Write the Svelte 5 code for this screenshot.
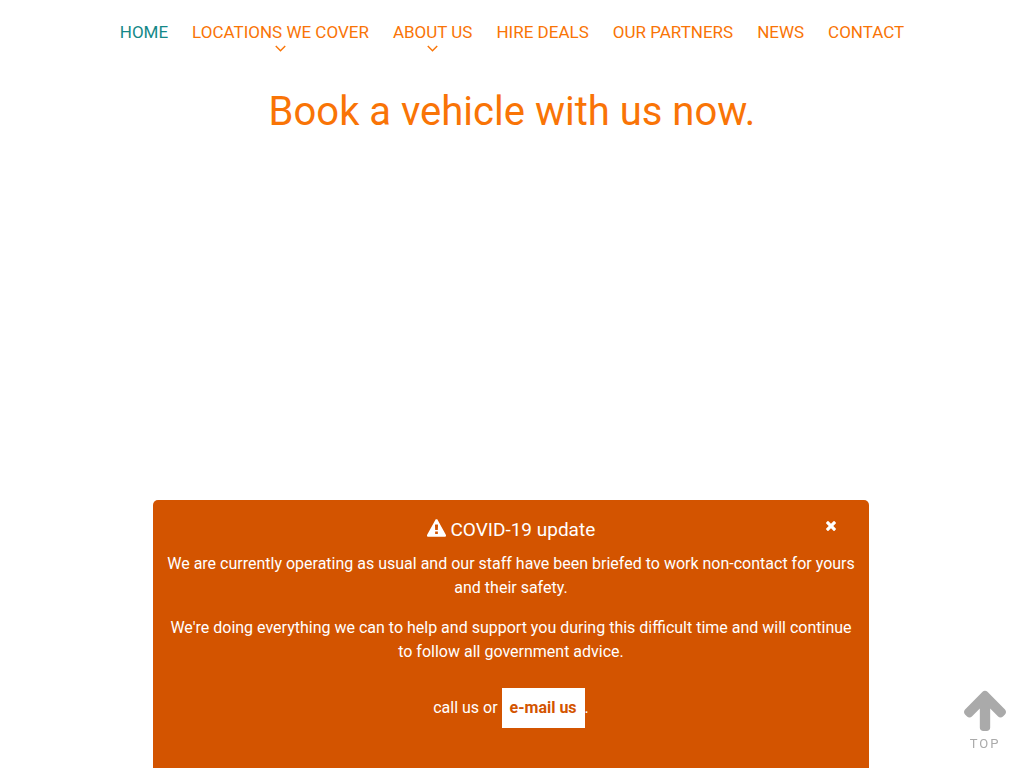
<script>
  const links = [
    { label: 'Home', active: true },
    { label: 'Locations we cover', menu: true },
    { label: 'About us', menu: true },
    { label: 'Hire deals' },
    { label: 'Our partners' },
    { label: 'News' },
    { label: 'Contact' }
  ];
  let open = $state(true);
</script>

<header>
  <nav aria-label="Main">
    <ul>
      {#each links as link}
        <li>
          <a href="#top" class:active={link.active}>{link.label}</a>
          {#if link.menu}
            <svg class="chevron" viewBox="0 0 10 6" aria-hidden="true"><path d="M.7.7 5 5 9.3.7" /></svg>
          {/if}
        </li>
      {/each}
    </ul>
  </nav>
</header>

<main>
  <h1>Book a vehicle with us now.</h1>
</main>

{#if open}
  <section class="notice">
    <button aria-label="Close" onclick={() => (open = false)}>
      <svg viewBox="110 366 1188 1188" aria-hidden="true"><path d="M1298 1322q0 40-28 68l-136 136q-28 28-68 28t-68-28L704 1232l-294 294q-28 28-68 28t-68-28l-136-136q-28-28-28-68t28-68l294-294L138 666q-28-28-28-68t28-68l136-136q28-28 68-28t68 28l294 294 294-294q28-28 68-28t68 28l136 136q28 28 28 68t-28 68L976 960l294 294q28 28 28 68z" /></svg>
    </button>
    <h2>
      <svg viewBox="0 128 1792 1664" aria-hidden="true"><path d="M1024 1503v-190q0-14-9.500-23.500t-22.500-9.500h-192q-13 0-22.500 9.500t-9.500 23.500v190q0 14 9.500 23.500t22.500 9.500h192q13 0 22.500-9.500t9.500-23.500zm-2-374l18-459q0-12-10-19-13-11-24-11h-220q-11 0-24 11-10 7-10 21l17 457q0 10 10 16.500t24 6.500h185q14 0 23.500-6.500t10.500-16.500zm-14-934l768 1408q35 63-2 126-17 29-46.500 46t-63.500 17h-1536q-34 0-63.500-17t-46.500-46q-37-63-2-126l768-1408q17-31 47-49t65-18 65 18 47 49z" /></svg>
      COVID-19 update
    </h2>
    <p>We are currently operating as usual and our staff have been briefed to work non-contact for yours and their safety.</p>
    <p>We're doing everything we can to help and support you during this difficult time and will continue to follow all government advice.</p>
    <p class="contact">call us or <a href="#email">e-mail us</a>.</p>
  </section>
{/if}

<a class="top" href="#top">
  <svg viewBox="53 128 1558 1536" preserveAspectRatio="none" aria-hidden="true"><path d="M1611 971q0 51-37 90l-75 75q-38 38-91 38-54 0-90-38l-294-293v704q0 52-37.500 84.500t-90.500 32.500h-128q-53 0-90.500-32.500t-37.500-84.500v-704l-294 293q-36 38-90 38t-90-38l-75-75q-38-38-38-90 0-53 38-91l651-651q35-37 90-37 54 0 91 37l651 651q37 39 37 91z" /></svg>
  <span>TOP</span>
</a>

<style>
  :global(body) {
    margin: 0;
    background: #fff;
    font: 16px/24px Roboto, sans-serif;
  }
  svg {
    fill: currentColor;
  }
  header {
    padding: 20px 16px;
  }
  ul {
    display: flex;
    justify-content: center;
    gap: 24px;
    margin: 0;
    padding: 0;
    list-style: none;
  }
  li {
    display: flex;
    flex-direction: column;
    align-items: center;
    height: 32px;
  }
  li a {
    color: #f97406;
    font-size: 17px;
    text-decoration: none;
    text-transform: uppercase;
  }
  li a.active {
    color: #148888;
  }
  .chevron {
    width: 11px;
    height: 7px;
    margin-top: 1px;
    fill: none;
    stroke: #f97406;
    stroke-width: 1.3;
  }
  h1 {
    margin: 16px;
    color: #f97406;
    font-size: 40px;
    font-weight: 400;
    line-height: 48px;
    text-align: center;
  }
  .notice {
    position: fixed;
    bottom: 0;
    left: calc(15% - 1px);
    width: 70%;
    box-sizing: border-box;
    padding: 16px 12px 24px;
    border-radius: 5px 5px 0 0;
    background: #d35400;
    color: #fff;
    text-align: center;
  }
  .notice h2 {
    margin: 0 0 8px;
    font-size: 19px;
    font-weight: 400;
    line-height: 28px;
  }
  h2 svg {
    width: 19px;
    height: 18px;
    vertical-align: -1px;
  }
  .notice p {
    margin: 0 0 16px;
  }
  .notice .contact {
    margin: 24px 0 16px;
    line-height: 40px;
  }
  .contact a {
    display: inline-block;
    padding: 0 8px;
    background: #fff;
    color: #d35400;
    font-weight: 700;
    text-decoration: none;
  }
  button {
    position: absolute;
    top: 16px;
    right: 28px;
    display: grid;
    place-items: center;
    width: 20px;
    height: 20px;
    padding: 0;
    border: 0;
    background: none;
    color: #fff;
    cursor: pointer;
  }
  button svg {
    width: 10px;
    height: 10px;
  }
  .top {
    position: fixed;
    right: 18px;
    bottom: 15px;
    display: flex;
    flex-direction: column;
    align-items: center;
    gap: 4px;
    color: #aaa;
    font-size: 13px;
    line-height: 18px;
    letter-spacing: 2px;
    text-decoration: none;
  }
  .top svg {
    width: 42px;
    height: 42px;
  }
</style>
